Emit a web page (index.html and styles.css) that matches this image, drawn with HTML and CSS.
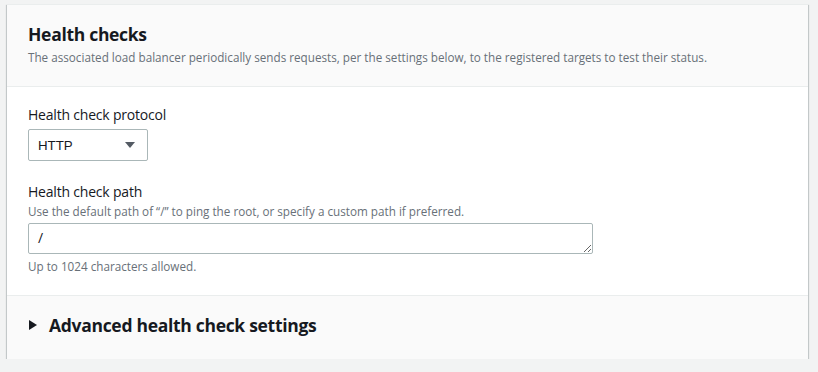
FILE: index.html
```html
<!DOCTYPE html>
<html lang="en">
<head>
<meta charset="utf-8">
<title>Health checks</title>
<link rel="stylesheet" href="styles.css">
</head>
<body>
<div class="card">
  <div class="card-header">
    <h2 class="title">Health checks</h2>
    <p class="desc">The associated load balancer periodically sends requests, per the settings below, to the registered targets to test their status.</p>
  </div>
  <div class="card-body">
    <div class="field">
      <label class="label">Health check protocol</label>
      <div class="select">
        <span class="select-value">HTTP</span>
        <svg class="caret" width="10" height="6" viewBox="0 0 10 6"><polygon points="0,0 10,0 5,6" fill="#545b64"/></svg>
      </div>
    </div>
    <div class="field field-path">
      <label class="label">Health check path</label>
      <p class="desc">Use the default path of “/” to ping the root, or specify a custom path if preferred.</p>
      <textarea class="textarea" rows="1">/</textarea>
      <p class="desc constraint">Up to 1024 characters allowed.</p>
    </div>
  </div>
  <div class="card-footer">
    <svg class="expand" width="8" height="10" viewBox="0 0 8 10"><polygon points="0,0 8,5 0,10" fill="#16191f"/></svg>
    <span class="footer-title">Advanced health check settings</span>
  </div>
</div>
</body>
</html>
```

FILE: styles.css
```css
html, body {
  margin: 0;
  padding: 0;
  background: #f2f3f3;
}
body {
  padding: 4px 10px 0 7px;
  font-family: "Open Sans", "Noto Sans", sans-serif;
  color: #16191f;
}
.card {
  background: #ffffff;
  border-top: 1px solid #eaeded;
  box-shadow: 0 1px 1px 0 rgba(0, 28, 36, 0.3), 1px 1px 1px 0 rgba(0, 28, 36, 0.15), -1px 1px 1px 0 rgba(0, 28, 36, 0.15);
}
.card-header {
  background: #fafafa;
  border-bottom: 1px solid #eaeded;
  padding: 18px 20px 21px 21px;
}
.title {
  margin: 0;
  font-size: 17.5px;
  line-height: 22px;
  font-weight: 700;
  letter-spacing: -0.3px;
}
.desc {
  margin: 0;
  font-size: 11.7px;
  line-height: 16px;
  color: #687078;
}
.card-header .desc {
  margin-top: 4px;
}
.card-body {
  padding: 17px 20px 21px 21px;
}
.field {
  display: flex;
  flex-direction: column;
  align-items: flex-start;
}
.field-path {
  margin-top: 20px;
}
.label {
  font-size: 14px;
  line-height: 22px;
  letter-spacing: -0.2px;
  color: #16191f;
}
.select {
  margin-top: 3px;
  box-sizing: border-box;
  width: 120px;
  height: 32px;
  border: 1px solid #aab7b8;
  border-radius: 2px;
  display: flex;
  align-items: center;
  justify-content: space-between;
  padding: 0 12px 0 9px;
  background: #fff;
}
.select-value {
  font-family: "Liberation Sans", Arial, sans-serif;
  font-size: 13.3px;
  color: #16191f;
}
.textarea {
  margin-top: 4px;
  box-sizing: border-box;
  width: 565px;
  height: 31px;
  border: 1px solid #aab7b8;
  border-radius: 2px;
  padding: 4px 9px;
  font-family: "Open Sans", sans-serif;
  font-size: 14px;
  line-height: 20px;
  color: #16191f;
  background: #fff;
}
.constraint {
  margin-top: 4px;
}
.card-footer {
  background: #fafafa;
  border-top: 1px solid #eaeded;
  padding: 18px 20px 23px 22px;
  display: flex;
  align-items: center;
  gap: 12px;
}
.footer-title {
  font-size: 17.5px;
  line-height: 22px;
  font-weight: 700;
  letter-spacing: -0.3px;
}
```
